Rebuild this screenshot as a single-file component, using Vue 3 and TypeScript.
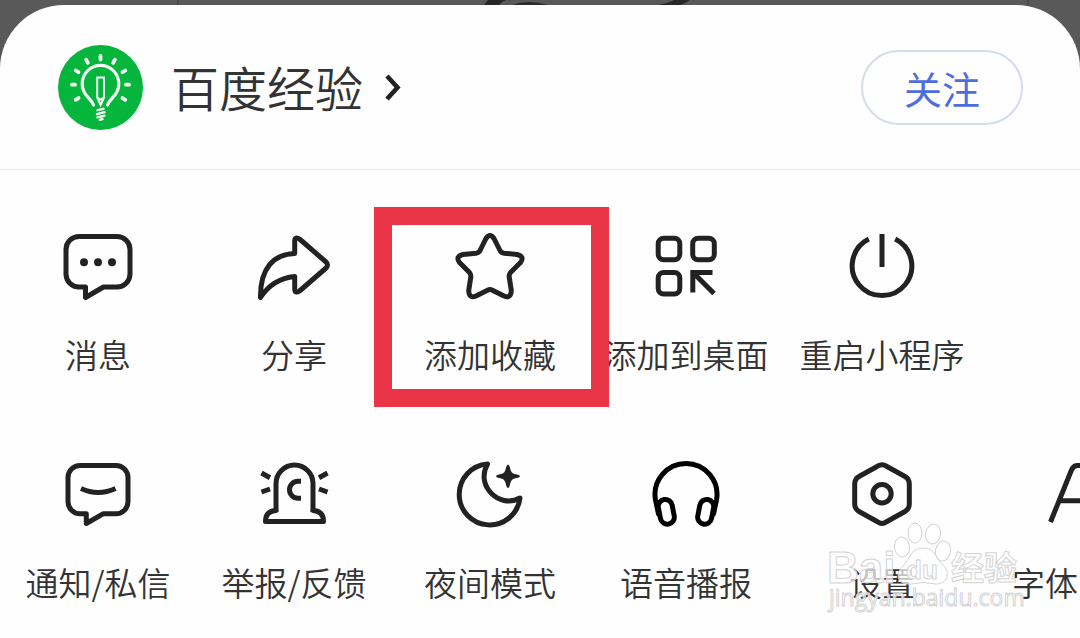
<script setup lang="ts">
interface Action {
  id: string
  label: string
  highlighted?: boolean
}

const rows: Action[][] = [
  [
    { id: 'message', label: '消息' },
    { id: 'share', label: '分享' },
    { id: 'favorite', label: '添加收藏', highlighted: true },
    { id: 'desktop', label: '添加到桌面' },
    { id: 'restart', label: '重启小程序' },
  ],
  [
    { id: 'notice', label: '通知/私信' },
    { id: 'report', label: '举报/反馈' },
    { id: 'night', label: '夜间模式' },
    { id: 'voice', label: '语音播报' },
    { id: 'settings', label: '设置' },
    { id: 'font', label: '字体' },
  ],
]

const rays: string[] = [
  'M42.5 11V14.5',
  'M28.2 14.8L29.8 17.8',
  'M56.8 14.8L55.2 17.8',
  'M17.7 25.5L20.5 27.2',
  'M67.3 25.5L64.5 27.2',
  'M14 39.7H17',
  'M71 39.7H68',
  'M17.7 54.8L20.5 53.1',
  'M67.3 54.8L64.5 53.1',
]
</script>

<template>
  <div class="page">
    <svg class="backdrop" viewBox="0 0 1080 5" preserveAspectRatio="none" aria-hidden="true">
      <path d="M484 5Q486 2 488 0H506Q501 2 499 5Z" fill="#262626" />
      <path d="M512 5Q528 -1 548 5Z" fill="#2c2b2a" />
      <path d="M658 5Q668 3 674 0H690Q684 4 680 5Z" fill="#2a2826" />
      <path d="M178 0V5M1028 0V5" stroke="#3c3c3c" />
    </svg>

    <main class="sheet">
      <header class="head">
        <button class="account" type="button">
          <svg class="avatar" viewBox="0 0 85 85" aria-hidden="true">
            <circle cx="42.5" cy="42.5" r="42.5" fill="#06b53c" />
            <g fill="none" stroke="#f2fff4" stroke-linecap="round">
              <path v-for="ray in rays" :key="ray" :d="ray" stroke-width="3.8" />
              <path
                d="M35.5 60C33.5 55 29.5 52.5 27 48.5A18.3 18.3 0 1 1 58 48.5C55.5 52.5 51.5 55 49.5 60"
                stroke-width="3.2"
              />
              <path d="M39.2 32.5H46V52.5L42.6 60L39.2 52.5ZM39.2 52.5L42.6 54.5L46 52.5" stroke-width="2" />
              <path d="M39.5 65.2L45.5 63.8M39 69.2L46.500 67.2M39.5 72.4L46.5 70.6M42 74.8L44.5 74" stroke-width="2.4" />
            </g>
          </svg>
          <span class="name">百度经验</span>
          <svg class="chevron" viewBox="0 0 20 30" aria-hidden="true">
            <path d="M4 3L14.500 14.500L4 26" fill="none" stroke="#222" stroke-width="4.600" />
          </svg>
        </button>
        <button class="follow" type="button">关注</button>
      </header>

      <nav class="actions">
        <div v-for="(row, index) in rows" :key="index" class="row">
          <button
            v-for="action in row"
            :key="action.id"
            class="tile"
            :class="{ highlighted: action.highlighted, partial: action.id === 'font' }"
            type="button"
          >
            <svg v-if="action.id === 'font'" class="icon half" viewBox="0 0 34 80" aria-hidden="true">
              <path d="M4.500 68L25.500 16Q27.500 11.500 31.500 11.500H36M13 46.700H36" />
            </svg>
            <svg v-else class="icon" :class="action.id" viewBox="0 0 80 80" aria-hidden="true">
              <template v-if="action.id === 'message'">
                <path d="M27.500 61H21A13 13 0 0 1 8 48V23.500A13 13 0 0 1 21 10.500H59A13 13 0 0 1 72 23.500V48A13 13 0 0 1 59 61H45.500L27.500 71.500Z" />
                <g class="solid">
                  <circle cx="26" cy="36.300" r="4" />
                  <circle cx="40" cy="36.300" r="4" />
                  <circle cx="54" cy="36.300" r="4" />
                </g>
              </template>
              <path
                v-else-if="action.id === 'share'"
                d="M40.700 27.500V15Q41 10 45.500 13L71.500 35.500Q75.500 39 71.500 42.500L45.500 65Q41 68 40.700 63V50.500C25 52 14 60 6.500 71.500C6 42 20 28 40.700 27.500Z"
              />
              <path
                v-else-if="action.id === 'favorite'"
                d="M44 12.500L50 24.500Q51 26.800 54 27.200L67 28.500Q75 30.500 70.500 36.500L60.500 46.500Q58.800 48.500 59.200 51L61.300 64.500Q61 73 54 70L42.500 64.200Q40 63 37.500 64.200L26 70Q19 73 18.700 64.500L20.800 51Q21.200 48.500 19.500 46.500L9.500 36.500Q5 30.500 13 28.500L26 27.200Q29 26.800 30 24.500L36 12.500Q40 6.500 44 12.500Z"
              />
              <template v-else-if="action.id === 'desktop'">
                <rect x="12.200" y="12.200" width="21.600" height="21.600" rx="5.500" />
                <rect x="46.700" y="12.200" width="21.600" height="21.600" rx="5.500" />
                <rect x="12.200" y="46.500" width="21.600" height="21.600" rx="5.500" />
                <path class="sharp" d="M66.500 46.500H46.800V66.500M47.500 47L68 67.500" />
              </template>
              <path
                v-else-if="action.id === 'restart'"
                class="sharp"
                d="M26.800 13.100A29.800 29.800 0 1 0 53.200 13.100M40 8V41"
              />
              <template v-else-if="action.id === 'notice'">
                <path d="M28.300 59.800H22A12 12 0 0 1 10 47.800V23.500A12 12 0 0 1 22 11.500H58A12 12 0 0 1 70 23.500V47.800A12 12 0 0 1 58 59.800H45L28.300 69.500Z" />
                <path class="sharp" d="M23 34.500Q40 42.500 57.500 34.500" />
              </template>
              <template v-else-if="action.id === 'report'">
                <path d="M22 56.500Q11.500 57 11.500 67.500H69.500Q69.500 57 59 56.500" />
                <path class="sharp" d="M22 58V29.500A18.500 18.500 0 0 1 59 29.500V58M47 27.300H44A8.500 8.500 0 0 0 44 44.300H47M7.500 19L16 23.700M7.500 38L16 35M73.500 19L65 23.700M73.500 38L65 35" />
              </template>
              <template v-else-if="action.id === 'night'">
                <path d="M37.500 10A30.500 30.500 0 1 0 70 44C59 50 48 46 41.500 39.500C33 31 32 20 37.500 10Z" />
                <path
                  class="solid"
                  d="M58 10.500Q59 10.500 59.800 13C61 18.500 62 19.500 67 20.500Q70 21.300 70 22.300T67 24.100C62 25 61 26 59.800 31.500Q59 34 58 34T56.200 31.500C55 26 54 25 49 24.100Q46 23.300 46 22.300T49 20.500C54 19.500 55 18.500 56.200 13Q57 10.500 58 10.500Z"
                />
              </template>
              <template v-else-if="action.id === 'voice'">
                <path d="M12.500 60L9.500 46A31 31 0 1 1 70.500 46L67.500 60" />
                <rect x="13.300" y="45.300" width="14" height="25" rx="7" transform="rotate(-11 20.300 57.800)" />
                <rect x="52.700" y="45.300" width="14" height="25" rx="7" transform="rotate(11 59.700 57.800)" />
              </template>
              <template v-else>
                <path d="M35.500 12.200Q40 9.200 44.500 12.200L63 22.500Q67.300 25 67.300 30V50Q67.300 55 63 57.500L44.500 67.800Q40 71.200 35.500 67.800L17 57.500Q12.700 55 12.700 50V30Q12.700 25 17 22.500Z" />
                <circle cx="40" cy="39.700" r="9.200" />
              </template>
            </svg>
            <span class="label">{{ action.label }}</span>
          </button>
        </div>
      </nav>
    </main>

    <svg class="watermark" viewBox="0 0 200 96" role="img" aria-label="Baidu经验 jingyan.baidu.com">
      <g class="mark">
        <text class="brand" x="1" y="62">Bai</text>
        <ellipse cx="76" cy="26" rx="7.500" ry="10" transform="rotate(-8 76 26)" />
        <ellipse cx="89" cy="12" rx="7" ry="10" />
        <ellipse cx="107" cy="13" rx="7.500" ry="10" transform="rotate(12 107 13)" />
        <ellipse cx="117" cy="30" rx="7.500" ry="10" transform="rotate(10 117 30)" />
        <path d="M97 27C110 27 110 39 117 44C125 52 121 63 110 63Q97 60 85 63C71 64 69 53 76 46C84 39 84 27 97 27Z" />
        <text class="brand small" x="80" y="58">du</text>
        <text class="brand cjk" x="125" y="59">经验</text>
        <text class="address" x="3" y="85">jingyan.baidu.com</text>
      </g>
    </svg>
  </div>
</template>

<style>
html,
body {
  margin: 0;
  background: #595959;
}
</style>

<style scoped>
.page {
  position: relative;
  box-sizing: border-box;
  min-height: 100vh;
  padding-top: 5px;
  overflow: hidden;
  display: flex;
  flex-direction: column;
  background: #595959;
  font-family: "Liberation Sans", "Noto Sans CJK SC", sans-serif;
}

.backdrop {
  position: absolute;
  top: 0;
  left: 0;
  width: 100%;
  height: 5px;
}

.sheet {
  position: relative;
  flex: 1;
  background: #fefefe;
  border-radius: 64px 64px 0 0;
}

button {
  margin: 0;
  padding: 0;
  border: 0;
  background: none;
  font-family: "Noto Sans CJK SC", sans-serif;
  cursor: pointer;
}

.head {
  display: flex;
  align-items: center;
  justify-content: space-between;
  padding: 40px 57px 39px 58px;
  border-bottom: 1px solid #ebebeb;
}

.account {
  display: flex;
  align-items: center;
}

.avatar {
  width: 85px;
  height: 85px;
  margin-right: 28px;
}

.name {
  padding-bottom: 4px;
  color: #333;
  font-size: 48px;
  font-weight: 350;
  line-height: 64px;
}

.chevron {
  width: 20px;
  height: 30px;
  margin-left: 20px;
}

.follow {
  box-sizing: border-box;
  padding: 0 41px;
  border: 2px solid #d3dbef;
  border-radius: 38px;
  color: #4e6ee0;
  font-size: 38px;
  font-weight: 400;
  line-height: 71px;
}

.actions {
  display: flex;
  flex-direction: column;
  gap: 80px;
  padding: 56px 0 24px;
}

.row {
  display: grid;
  grid-template-columns: repeat(5, minmax(0, 196fr)) minmax(0, 100fr);
}

.tile {
  position: relative;
  display: flex;
  flex-direction: column;
  align-items: center;
  gap: 28px;
}

.partial {
  align-items: flex-end;
}

.highlighted::after {
  content: "";
  position: absolute;
  z-index: 1;
  inset: -19px -21px -33px -18px;
  border: 18px solid #ea3549;
  pointer-events: none;
}

.icon {
  width: 80px;
  height: 80px;
  fill: none;
  stroke: #222;
  stroke-width: 5;
  stroke-linecap: round;
  stroke-linejoin: round;
}

.half {
  width: 34px;
  stroke-linecap: butt;
}

.voice {
  stroke: #000;
}

.sharp {
  stroke-linecap: butt;
  stroke-linejoin: miter;
}

.solid {
  fill: #222;
  stroke: none;
}

.label {
  color: #333;
  font-size: 33px;
  font-weight: 350;
  line-height: 40px;
  white-space: nowrap;
}

.partial .label {
  padding-right: 2px;
}

.watermark {
  position: absolute;
  right: 54px;
  bottom: 21px;
  width: 200px;
  height: 96px;
  overflow: visible;
  pointer-events: none;
}

.mark {
  fill: rgba(255, 255, 255, 0.7);
  stroke: #d4d4d4;
  stroke-width: 1;
}

.brand {
  font: 700 44px "Liberation Sans", sans-serif;
}

.small {
  font-size: 26px;
}

.cjk {
  font-family: "Noto Sans CJK SC", sans-serif;
  font-size: 33px;
}

.address {
  font: 400 23px "Open Sans", "Noto Sans", sans-serif;
}
</style>
